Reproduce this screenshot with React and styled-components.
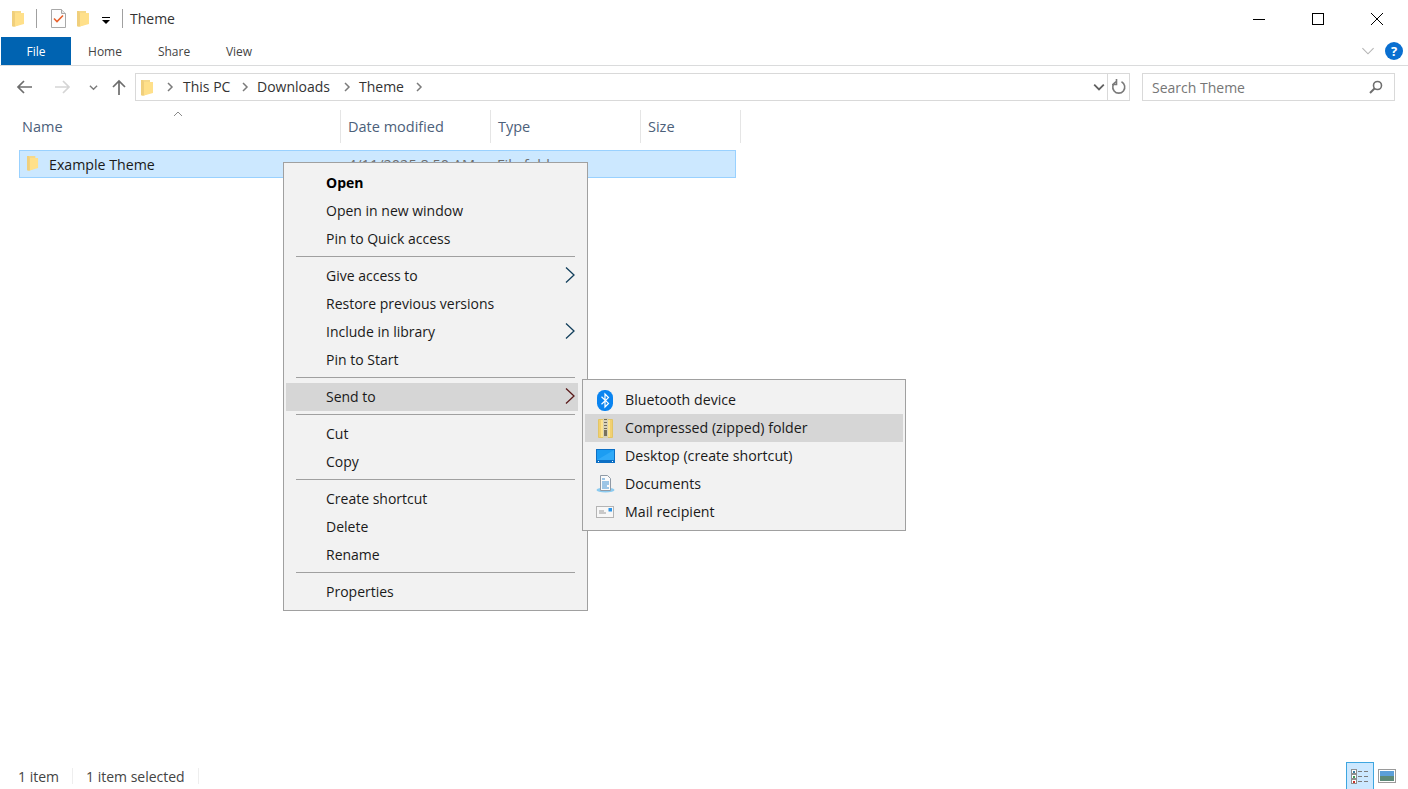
import * as React from "react"
import styled, { createGlobalStyle } from 'styled-components'

const GlobalStyle = createGlobalStyle`
  html, body {
    margin: 0;
    padding: 0;
    height: 100%;
    overflow: hidden;
    background: #fff;
  }
  body {
    font-family: "Open Sans", "Noto Sans", "Liberation Sans", sans-serif;
    font-size: 14px;
    color: #1a1a1a;
  }
`

const FolderIcon = ({ width = 13, height = 17 }) => (
  <svg width={width} height={height} viewBox="0 0 13 17">
    <path d="M0 1h9v13l-6 2.500H1L0 16z" fill="#f6d98a" />
    <path d="M3 3h9v11l-9 2.500z" fill="#ffe08a" />
    <path d="M0 1h2l1 2v13.500H1L0 16z" fill="#f0cf7c" />
  </svg>
)

const TaskIcon = () => (
  <svg width="15" height="19" viewBox="0 0 15 19">
    <path d="M.5.5h10l4 4v14H.5z" fill="#fdfdfd" stroke="#a8a8a8" />
    <path d="M10.500.5v4h4" fill="#e6e6e6" stroke="#a8a8a8" />
    <path d="M3 9.500l3 3 6-6" fill="none" stroke="#e8602c" strokeWidth="1.600" />
  </svg>
)

const Chevron = ({ dir = 'right', color = '#7b7b7b', size = 10, strokeWidth = 1.5 }) => {
  const paths = {
    right: 'M3 1l4 4-4 4',
    down: 'M1 3l4 4 4-4',
    up: 'M1 7l4-4 4 4',
  }
  return (
    <svg width={size} height={size} viewBox="0 0 10 10">
      <path d={paths[dir]} fill="none" stroke={color} strokeWidth={strokeWidth} />
    </svg>
  )
}

const ArrowIcon = ({ dir, color }) => {
  const d = dir === 'left' ? 'M16 8H2M8 2L2 8l6 6'
    : dir === 'right' ? 'M0 8h14M8 2l6 6-6 6'
    : 'M8 16V2M2 8l6-6 6 6'
  return (
    <svg width="16" height="16" viewBox="0 0 16 16">
      <path d={d} fill="none" stroke={color} strokeWidth="1.700" />
    </svg>
  )
}

const BluetoothIcon = () => (
  <svg width="16" height="21" viewBox="0 0 16 21">
    <rect width="16" height="21" rx="7.500" fill="#0a84f0" />
    <path d="M4.500 6.800l7 6.600L8 17V4l3.500 3.600-7 6.600" fill="none" stroke="#fff" strokeWidth="1.200" />
  </svg>
)

const ZipIcon = () => (
  <svg width="15" height="20" viewBox="0 0 15 20">
    <path d="M.5 1.500h14v18H.5z" fill="#fbe38e" stroke="#e3c565" />
    <rect x="1" y="2" width="2" height="17" fill="#f1d071" />
    <rect x="12" y="2" width="2" height="17" fill="#f1d071" />
    <rect x="5" y="0" width="5" height="20" fill="#d8d2b8" />
    <path d="M6 1.500h3M6 4.500h3M6 7.500h3M6 10.500h3" stroke="#6f6a5a" />
    <rect x="6" y="12" width="3" height="6" fill="#77725f" />
  </svg>
)

const DesktopIcon = () => (
  <svg width="19" height="14" viewBox="0 0 19 14">
    <rect width="19" height="14" fill="#0d6fc4" />
    <rect x="1" y="1" width="17" height="10" fill="#1c9df2" />
    <path d="M1 11L18 1v10z" fill="#30aaf8" />
    <path d="M2 12.500h1M16 12.500h1" stroke="#fff" />
  </svg>
)

const DocumentsIcon = () => (
  <svg width="19" height="18" viewBox="0 0 19 18">
    <ellipse cx="9.500" cy="15" rx="9" ry="2.500" fill="#8ccbf0" />
    <path d="M4.500.5h7l3 3v12h-10z" fill="#fafafa" stroke="#8f9aa6" />
    <path d="M6 4h3M6 7h7M6 9h7M6 11h5M6 13h7" stroke="#3d8fd1" />
  </svg>
)

const MailIcon = () => (
  <svg width="18" height="12" viewBox="0 0 18 12">
    <rect x=".5" y=".5" width="17" height="11" fill="#f7f7f7" stroke="#b4b4b4" />
    <rect x="12.500" y="2" width="3.500" height="3.500" fill="#2e96e8" />
    <path d="M3 5h5M3 7h7" stroke="#9a9a9a" />
  </svg>
)

const menuGroups = [
  [
    { label: 'Open', bold: true },
    { label: 'Open in new window' },
    { label: 'Pin to Quick access' },
  ],
  [
    { label: 'Give access to', sub: true },
    { label: 'Restore previous versions' },
    { label: 'Include in library', sub: true },
    { label: 'Pin to Start' },
  ],
  [{ label: 'Send to', sub: true, active: true }],
  [{ label: 'Cut' }, { label: 'Copy' }],
  [{ label: 'Create shortcut' }, { label: 'Delete' }, { label: 'Rename' }],
  [{ label: 'Properties' }],
]

const sendToItems = [
  { label: 'Bluetooth device', icon: <BluetoothIcon /> },
  { label: 'Compressed (zipped) folder', icon: <ZipIcon />, active: true },
  { label: 'Desktop (create shortcut)', icon: <DesktopIcon /> },
  { label: 'Documents', icon: <DocumentsIcon /> },
  { label: 'Mail recipient', icon: <MailIcon /> },
]

const columns = [
  { label: 'Name', width: 322 },
  { label: 'Date modified', width: 150 },
  { label: 'Type', width: 150 },
  { label: 'Size', width: 100 },
]

const App = () => {
  return (
    <Page>
      <GlobalStyle />
      <TitleBar>
        <QuickAccess>
          <FolderIcon />
          <TitleDivider $left={11} $right={14} />
          <TaskIcon />
          <QuickFolder><FolderIcon /></QuickFolder>
          <DropButton />
          <TitleDivider $left={12} $right={7} />
          <WindowTitle>Theme</WindowTitle>
        </QuickAccess>
        <WindowButtons>
          <WindowButton>
            <svg width="12" height="12" viewBox="0 0 12 12"><path d="M0 6.500h12" stroke="#000" /></svg>
          </WindowButton>
          <WindowButton>
            <svg width="12" height="12" viewBox="0 0 12 12"><rect x=".5" y=".5" width="11" height="11" fill="none" stroke="#000" /></svg>
          </WindowButton>
          <WindowButton>
            <svg width="12" height="12" viewBox="0 0 12 12"><path d="M0 0l12 12M12 0L0 12" stroke="#000" /></svg>
          </WindowButton>
        </WindowButtons>
      </TitleBar>

      <Ribbon>
        <FileTab>File</FileTab>
        <RibbonTab $width={68}>Home</RibbonTab>
        <RibbonTab $width={70}>Share</RibbonTab>
        <RibbonTab $width={60}>View</RibbonTab>
        <RibbonRight>
          <Chevron dir="down" color="#b5b5b5" size={14} strokeWidth={0.8} />
          <HelpBadge>?</HelpBadge>
        </RibbonRight>
      </Ribbon>

      <NavBar>
        <NavButtons>
          <ArrowIcon dir="left" color="#6d6d6d" />
          <ArrowSpacer $width={23} />
          <ArrowIcon dir="right" color="#d5d5d5" />
          <ArrowSpacer $width={18} />
          <Chevron dir="down" color="#7b7b7b" size={9} />
          <ArrowSpacer $width={13} />
          <ArrowIcon dir="up" color="#6d6d6d" />
        </NavButtons>
        <AddressBar>
          <AddressFolder><FolderIcon /></AddressFolder>
          <Crumb><Chevron /></Crumb>
          <CrumbText $width={58} $left={1}>This PC</CrumbText>
          <Crumb><Chevron /></Crumb>
          <CrumbText $width={85}>Downloads</CrumbText>
          <Crumb><Chevron /></Crumb>
          <CrumbText $width={55}>Theme</CrumbText>
          <Crumb><Chevron /></Crumb>
          <AddressEnd>
            <Chevron dir="down" color="#606060" size={12} />
            <RefreshButton>
              <svg width="16" height="16" viewBox="0 0 16 16">
                <path d="M10.500 2.800A6 6 0 1 1 5 2.800" fill="none" stroke="#7a7a7a" strokeWidth="1.600" />
                <path d="M5.500 0v5.500H1" fill="none" stroke="#7a7a7a" strokeWidth="1.600" />
              </svg>
            </RefreshButton>
          </AddressEnd>
        </AddressBar>
        <SearchBox>
          <span>Search Theme</span>
          <svg width="14" height="14" viewBox="0 0 14 14">
            <circle cx="8.500" cy="5.500" r="4" fill="none" stroke="#6e6e6e" strokeWidth="1.600" />
            <path d="M5.500 8.500L1 13" stroke="#6e6e6e" strokeWidth="2" />
          </svg>
        </SearchBox>
      </NavBar>

      <Content>
        <ColumnHeaders>
          <SortMark><Chevron dir="up" color="#8a8a8a" size={10} strokeWidth={1} /></SortMark>
          {columns.map((col, index) => (
            <ColumnHeader key={index} $width={col.width} $first={index === 0}>{col.label}</ColumnHeader>
          ))}
        </ColumnHeaders>
        <FileRow>
          <FileName>
            <FolderIcon width={12} height={16} />
            <span>Example Theme</span>
          </FileName>
          <FileCell $width={149}>4/11/2025 8:50 AM</FileCell>
          <FileCell $width={150}>File folder</FileCell>
        </FileRow>
      </Content>

      <StatusBar>
        <StatusText $width={54}>1 item</StatusText>
        <StatusDivider />
        <StatusText $width={112} $left={13}>1 item selected</StatusText>
        <StatusDivider />
        <ViewButtons>
          <ViewButton $active>
            <svg width="18" height="15" viewBox="0 0 18 15">
              <rect x=".5" y=".5" width="5" height="4" fill="#fff" stroke="#8f8f8f" />
              <rect x=".5" y="5.500" width="5" height="4" fill="#fff" stroke="#8f8f8f" />
              <rect x=".5" y="10.500" width="5" height="4" fill="#fff" stroke="#8f8f8f" />
              <rect x="2" y="2" width="2" height="2" fill="#3b7ea1" />
              <rect x="2" y="7" width="2" height="2" fill="#3d9a58" />
              <rect x="2" y="12" width="2" height="2" fill="#c8322b" />
              <path d="M7 2.500h4M13 2.500h4M7 7.500h4M13 7.500h4M7 12.500h4M13 12.500h4" stroke="#7c7c7c" />
            </svg>
          </ViewButton>
          <ViewButton>
            <svg width="18" height="14" viewBox="0 0 18 14">
              <rect x=".5" y=".5" width="17" height="13" fill="#fff" stroke="#9a9a9a" />
              <rect x="2" y="2" width="14" height="5" fill="#5b9fd8" />
              <rect x="2" y="7" width="14" height="5" fill="#5d8a78" />
            </svg>
          </ViewButton>
        </ViewButtons>
      </StatusBar>

      <ContextMenu>
        {menuGroups.map((group, groupIndex) => (
          <React.Fragment key={groupIndex}>
            {groupIndex > 0 && <MenuSeparator />}
            {group.map((item) => (
              <MenuItem key={item.label} $active={item.active} $bold={item.bold}>
                <span>{item.label}</span>
                {item.sub && (
                  <SubArrow>
                    <svg width="10" height="16" viewBox="0 0 10 16">
                      <path d="M1 .5L9 8l-8 7.500" fill="none" stroke={item.active ? '#5a1a1a' : '#123f5c'} strokeWidth="1.300" />
                    </svg>
                  </SubArrow>
                )}
              </MenuItem>
            ))}
          </React.Fragment>
        ))}
      </ContextMenu>

      <SubMenu>
        {sendToItems.map((item) => (
          <SubMenuItem key={item.label} $active={item.active}>
            <SubIcon>{item.icon}</SubIcon>
            <SubLabel>{item.label}</SubLabel>
          </SubMenuItem>
        ))}
      </SubMenu>
    </Page>
  )
}

const Page = styled.div`
  position: relative;
  display: flex;
  flex-direction: column;
  height: 100vh;
  overflow: hidden;
  background: #fff;
`

const TitleBar = styled.div`
  display: flex;
  justify-content: space-between;
  height: 37px;
  flex: none;
`

const QuickAccess = styled.div`
  display: flex;
  align-items: center;
  padding-left: 12px;
`

const TitleDivider = styled.div`
  width: 1px;
  height: 19px;
  background: #a0a0a0;
  margin: 0 ${props => props.$right}px 0 ${props => props.$left}px;
`

const QuickFolder = styled.div`
  display: flex;
  margin-left: 11px;
`

const DropButton = styled.div`
  width: 8px;
  height: 6px;
  margin: 4px 0 0 12px;
  border-top: 1px solid #000;
  position: relative;
  &::after {
    content: "";
    position: absolute;
    left: 0;
    top: 2px;
    border-left: 4px solid transparent;
    border-right: 4px solid transparent;
    border-top: 4px solid #000;
  }
`

const WindowTitle = styled.div`
  font-size: 14px;
  color: #333;
`

const WindowButtons = styled.div`
  display: flex;
  padding-right: 2px;
`

const WindowButton = styled.div`
  width: 59px;
  height: 37px;
  display: flex;
  align-items: center;
  justify-content: center;
`

const Ribbon = styled.div`
  display: flex;
  align-items: stretch;
  height: 28px;
  flex: none;
  padding-left: 1px;
  border-bottom: 1px solid #dadbdc;
  box-sizing: content-box;
`

const FileTab = styled.div`
  width: 70px;
  display: flex;
  align-items: center;
  justify-content: center;
  background: #0063b1;
  color: #fff;
  font-size: 12px;
`

const RibbonTab = styled.div`
  width: ${props => props.$width}px;
  display: flex;
  align-items: center;
  justify-content: center;
  font-size: 12px;
  color: #444;
`

const RibbonRight = styled.div`
  margin-left: auto;
  display: flex;
  align-items: center;
  gap: 10px;
  padding-right: 5px;
`

const HelpBadge = styled.div`
  width: 18px;
  height: 18px;
  border-radius: 50%;
  background: #0a6fd0;
  color: #fff;
  font-size: 13px;
  font-weight: 700;
  line-height: 18px;
  text-align: center;
`

const NavBar = styled.div`
  display: flex;
  align-items: center;
  height: 28px;
  flex: none;
  margin-top: 7px;
`

const NavButtons = styled.div`
  display: flex;
  align-items: center;
  width: 135px;
  padding-left: 16px;
  box-sizing: border-box;
`

const ArrowSpacer = styled.div`
  width: ${props => props.$width}px;
`

const AddressBar = styled.div`
  display: flex;
  align-items: center;
  width: 995px;
  height: 28px;
  box-sizing: border-box;
  border: 1px solid #d9d9d9;
  font-size: 14px;
  color: #333;
`

const AddressFolder = styled.div`
  display: flex;
  margin: 0 11px 0 5px;
`

const Crumb = styled.div`
  display: flex;
  width: 16px;
  margin-right: 1px;
`

const CrumbText = styled.div`
  width: ${props => props.$width}px;
  padding: 0 0 2px ${props => props.$left || 0}px;
  box-sizing: border-box;
`

const AddressEnd = styled.div`
  margin-left: auto;
  display: flex;
  align-items: center;
  height: 100%;
`

const RefreshButton = styled.div`
  width: 21px;
  height: 100%;
  margin-left: 2px;
  border-left: 1px solid #d9d9d9;
  display: flex;
  align-items: center;
  justify-content: center;
`

const SearchBox = styled.div`
  display: flex;
  align-items: center;
  justify-content: space-between;
  width: 253px;
  height: 28px;
  margin-left: 12px;
  padding: 0 11px 0 9px;
  box-sizing: border-box;
  border: 1px solid #d9d9d9;
  font-size: 14px;
  color: #767676;
`

const Content = styled.div`
  flex: 1;
  min-height: 0;
`

const ColumnHeaders = styled.div`
  position: relative;
  display: flex;
  height: 33px;
  margin-top: 9px;
  padding-left: 19px;
`

const SortMark = styled.div`
  position: absolute;
  left: 173px;
  top: -1px;
  display: flex;
`

const ColumnHeader = styled.div`
  width: ${props => props.$width}px;
  box-sizing: border-box;
  display: flex;
  align-items: center;
  padding-left: ${props => props.$first ? 3 : 7}px;
  border-right: 1px solid #e5e5e5;
  font-size: 14.500px;
  color: #4c607a;
`

const FileRow = styled.div`
  display: flex;
  align-items: center;
  width: 717px;
  height: 28px;
  margin: 7px 0 0 19px;
  box-sizing: border-box;
  background: #cce8ff;
  border: 1px solid #99d1ff;
`

const FileName = styled.div`
  display: flex;
  align-items: center;
  gap: 10px;
  width: 328px;
  padding-left: 7px;
  box-sizing: border-box;
  font-size: 14.200px;
  color: #1a1a1a;
  svg {
    margin-top: -3px;
  }
`

const FileCell = styled.div`
  width: ${props => props.$width}px;
  font-size: 14.500px;
  color: #6d6d6d;
  white-space: nowrap;
`

const StatusBar = styled.div`
  display: flex;
  align-items: center;
  height: 27px;
  flex: none;
  padding-left: 18px;
  font-size: 14px;
  color: #444;
`

const StatusText = styled.div`
  width: ${props => props.$width}px;
  margin-left: ${props => props.$left || 0}px;
  padding-top: 2px;
  white-space: nowrap;
`

const StatusDivider = styled.div`
  width: 1px;
  height: 16px;
  background: #eeeeee;
`

const ViewButtons = styled.div`
  margin-left: auto;
  display: flex;
  height: 100%;
  padding-right: 8px;
`

const ViewButton = styled.div`
  width: ${props => props.$active ? 28 : 26}px;
  box-sizing: border-box;
  display: flex;
  align-items: center;
  justify-content: center;
  background: ${props => props.$active ? '#cce8ff' : 'transparent'};
  border: ${props => props.$active ? '1px solid #3ea6e0' : 'none'};
  border-bottom: none;
`

const ContextMenu = styled.div`
  position: absolute;
  left: 283px;
  top: 162px;
  width: 305px;
  height: 449px;
  box-sizing: border-box;
  padding: 6px 2px 0;
  background: #f2f2f2;
  border: 1px solid #a0a0a0;
  font-size: 14px;
  color: #1a1a1a;
`

const MenuItem = styled.div`
  position: relative;
  display: flex;
  align-items: center;
  height: 28px;
  padding: 0 0 2px 40px;
  width: 292px;
  box-sizing: border-box;
  background: ${props => props.$active ? '#d6d6d6' : 'transparent'};
  font-weight: ${props => props.$bold ? 700 : 400};
  color: ${props => props.$bold ? '#000' : 'inherit'};
`

const SubArrow = styled.div`
  position: absolute;
  right: 3px;
  top: 5px;
  display: flex;
`

const MenuSeparator = styled.div`
  height: 1px;
  margin: 3px 10px 5px 10px;
  width: 279px;
  background: #a0a0a0;
`

const SubMenu = styled.div`
  position: absolute;
  left: 582px;
  top: 379px;
  width: 324px;
  height: 152px;
  box-sizing: border-box;
  padding: 6px 2px 0;
  background: #f2f2f2;
  border: 1px solid #a0a0a0;
  font-size: 14px;
  color: #1a1a1a;
`

const SubMenuItem = styled.div`
  display: flex;
  align-items: center;
  height: 28px;
  background: ${props => props.$active ? '#d6d6d6' : 'transparent'};
`

const SubIcon = styled.div`
  display: flex;
  align-items: center;
  justify-content: center;
  width: 40px;
`

const SubLabel = styled.span`
  padding-bottom: 2px;
  font-size: 14.200px;
`

export default App
